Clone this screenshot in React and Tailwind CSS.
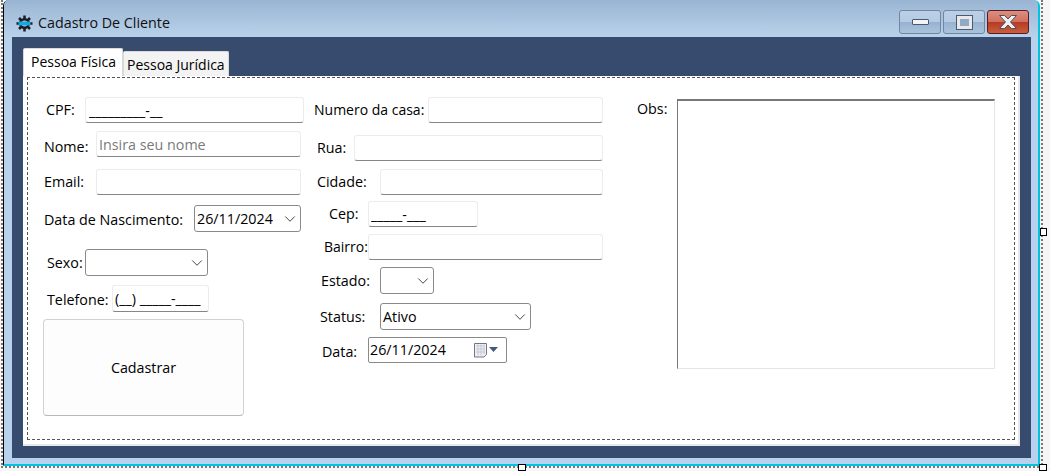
import { ChevronDown } from 'lucide-react';

const font = "font-['Open_Sans','Noto_Sans',sans-serif]";

// text box: light border with a darker bottom edge
function Field({ className = '', value = '', placeholder = '' }) {
  return (
    <input
      readOnly
      defaultValue={value}
      placeholder={placeholder}
      className={`bg-white border border-[#ececec] border-b-[#868686] rounded-[3px] px-[2px] text-[14.3px] text-black placeholder:text-[#7a7a7a] outline-none ${className}`}
    />
  );
}

function Combo({ className = '', value = '' }) {
  return (
    <div className={`flex items-center justify-between bg-white border border-[#8a8a8a] rounded-[3px] pl-[2px] pr-[1px] text-[14.3px] text-black ${className}`}>
      <span>{value}</span>
      <ChevronDown size={18} strokeWidth={1.2} color="#333" />
    </div>
  );
}

function CalendarIcon() {
  return (
    <svg width="33" height="17" viewBox="0 0 33 17">
      <path d="M1.500 1.500h12v11l-2.500 2.500h-9.500z" fill="#eef0f4" stroke="#77757a" />
      <path d="M3 4h9M3 7h9M3 10h9M5 2.500v11M8 2.500v11M11 2.500v10" stroke="#c2c9d6" fill="none" />
      <path d="M16 5h9l-4.500 5z" fill="#44597c" />
    </svg>
  );
}

function WindowButton({ className = '', children }) {
  return (
    <button className={`relative flex items-center justify-center w-[42px] h-[24px] rounded-[3px] border ${className}`}>
      {children}
    </button>
  );
}

export default function App() {
  return (
    <div className={`relative w-[1050px] h-[471px] overflow-hidden bg-[#f6f6f6] ${font}`}>
      {/* form window */}
      <div className="absolute left-[3px] top-0 w-[1037px] h-[466px] flex flex-col bg-[#b8d1ec] border-l border-black border-r-2 border-r-[#00c4e0] border-b-2 border-b-[#00c4e0] rounded-t-[6px] overflow-hidden">
        {/* title bar */}
        <div className="flex items-start h-[37px] shrink-0 bg-gradient-to-b from-[#9ab5d3] to-[#b9d2eb]">
          <div className="flex items-center mt-[14px] ml-[12px] gap-[5px] text-[14.3px] leading-[18px] text-[#111]">
            <svg width="17" height="17" viewBox="0 0 17 17">
              <path d="M8.500 0.500v16M0.500 8.500h16M3 3l11 11M14 3l-11 11" stroke="#1c1c24" strokeWidth="2.500" />
              <circle cx="8.500" cy="8.500" r="5.500" fill="#1c1c24" />
              <circle cx="8.500" cy="8.500" r="3" fill="#b9d2eb" />
              <rect x="2.500" y="6.500" width="12" height="4" rx="1" fill="#14a8e0" />
            </svg>
            <span>Cadastro De Cliente</span>
          </div>
          <div className="flex ml-auto mt-[10px] mr-[9px] gap-[2px]">
            <WindowButton className="border-[#72879f] bg-[linear-gradient(#bcd0e6_0%,#b4cbe3_48%,#97b2cf_50%,#a9c3de_100%)]">
              <span className="w-[17px] h-[6px] bg-[#f2f3f5] border border-[#4a5a70] rounded-[1px]" />
            </WindowButton>
            <WindowButton className="border-[#72879f] bg-[linear-gradient(#bcd0e6_0%,#b4cbe3_48%,#97b2cf_50%,#a9c3de_100%)]">
              <span className="w-[15px] h-[13px] border-[3px] border-[#e8e8ea] outline outline-1 outline-[#4a5a70] bg-[#8fa9c6]" />
            </WindowButton>
            <WindowButton className="border-[#5b1a24] bg-[linear-gradient(#da8f80_0%,#d2705e_48%,#b53a22_50%,#c8603f_100%)]">
              <svg width="20" height="16" viewBox="0 0 20 16">
                <path d="M1.500 1.500h5l3.500 3.500 3.500-3.500h5l-6 6.500 6 6.500h-5l-3.500-3.500-3.500 3.500h-5l6-6.500z" fill="#eeeff1" stroke="#4d4f5e" />
              </svg>
            </WindowButton>
          </div>
        </div>

        {/* client area */}
        <div className="w-[1019px] h-[421px] ml-[8px] bg-[#364b6d] pl-[11px] pt-[11px]">
          {/* tabs */}
          <div className="flex items-end h-[28px] text-[14px] leading-[18px] text-black">
            <div className="h-[28px] w-[100px] pl-[7px] pt-[4px] bg-white border border-b-0 border-[#d9d9d9] rounded-t-[2px]">Pessoa Física</div>
            <div className="h-[25px] w-[106px] pl-[3px] pt-[4px] bg-[#f3f3f3] border border-b-0 border-[#d9d9d9] rounded-t-[2px]">Pessoa Jurídica</div>
          </div>
          {/* tab page */}
          <div className="w-[997px] h-[370px] bg-white border-r-2 border-b-2 border-[#e8e8e8] pl-[4px] pt-[1px]">
            <div className="flex w-[988px] h-[363px] border border-dashed border-[#555] text-[14.3px] leading-[18px] text-black">
              {/* coluna 1 */}
              <div className="flex flex-col w-[271px] ml-[15px] pt-[19px] shrink-0">
                <div className="flex items-center h-[26px] pl-[3px]">
                  <span className="w-[39px]">CPF:</span>
                  <Field className="w-[219px] h-[26px] pl-[3px]" value="_________-__" />
                </div>
                <div className="flex items-center h-[26px] mt-[8px] pl-[1px]">
                  <span className="w-[52px] mt-[6px]">Nome:</span>
                  <Field className="w-[205px] h-[26px]" placeholder="Insira seu nome" />
                </div>
                <div className="flex items-center h-[26px] mt-[12px] pl-[1px]">
                  <span className="w-[52px]">Email:</span>
                  <Field className="w-[205px] h-[26px]" />
                </div>
                <div className="flex items-center h-[27px] mt-[10px] pl-[1px]">
                  <span className="w-[150px] mt-[3px]">Data de Nascimento:</span>
                  <Combo className="w-[107px] h-[27px]" value="26/11/2024" />
                </div>
                <div className="flex items-center h-[27px] mt-[17px] pl-[4px]">
                  <span className="w-[38px]">Sexo:</span>
                  <Combo className="w-[123px] h-[27px]" />
                </div>
                <div className="flex items-center h-[27px] mt-[9px] pl-[4px]">
                  <span className="w-[65px] mt-[3px]">Telefone:</span>
                  <Field className="w-[97px] h-[27px]" value="(__) _____-____" />
                </div>
                <button className="w-[201px] h-[97px] mt-[7px] bg-[#fdfdfd] border border-[#d2d2d2] border-b-[#b8b8b8] rounded-[4px]">Cadastrar</button>
              </div>

              {/* coluna 2 */}
              <div className="flex flex-col w-[323px] pt-[19px] shrink-0">
                <div className="flex items-center h-[26px]">
                  <span className="w-[114px] text-[14px]">Numero da casa:</span>
                  <Field className="w-[175px] h-[26px]" />
                </div>
                <div className="flex items-center h-[26px] mt-[12px] pl-[3px]">
                  <span className="w-[37px]">Rua:</span>
                  <Field className="w-[249px] h-[26px]" />
                </div>
                <div className="flex items-center h-[26px] mt-[8px] pl-[3px]">
                  <span className="w-[63px]">Cidade:</span>
                  <Field className="w-[223px] h-[26px]" />
                </div>
                <div className="flex items-center h-[26px] mt-[6px] pl-[15px]">
                  <span className="w-[39px]">Cep:</span>
                  <Field className="w-[110px] h-[26px]" value="_____-___" />
                </div>
                <div className="flex items-center h-[26px] mt-[7px] pl-[10px]">
                  <span className="w-[44px] text-[14px]">Bairro:</span>
                  <Field className="w-[235px] h-[26px]" />
                </div>
                <div className="flex items-center h-[27px] mt-[7px] pl-[7px]">
                  <span className="w-[59px]">Estado:</span>
                  <Combo className="w-[54px] h-[27px]" />
                </div>
                <div className="flex items-center h-[27px] mt-[9px] pl-[6px]">
                  <span className="w-[60px]">Status:</span>
                  <Combo className="w-[151px] h-[27px]" value="Ativo" />
                </div>
                <div className="flex items-center h-[26px] mt-[7px] pl-[8px]">
                  <span className="w-[46px] mt-[4px]">Data:</span>
                  <div className="flex items-center justify-between w-[139px] h-[26px] bg-white border border-[#8a8a8a] rounded-[2px] pl-[1px]">
                    <span>26/11/2024</span>
                    <CalendarIcon />
                  </div>
                </div>
              </div>

              {/* coluna 3 */}
              <div className="flex items-start pt-[21px]">
                <span className="w-[40px] mt-[1px]">Obs:</span>
                <textarea readOnly className="w-[318px] h-[270px] bg-white border border-[#e6e6e6] border-t-2 border-t-[#777] border-l-[#777] resize-none outline-none" />
              </div>
            </div>
          </div>
        </div>
      </div>

      {/* designer selection frame */}
      <div className="absolute left-[1px] top-0 w-[1042px] h-[468px] border-l-2 border-r-2 border-b-2 border-dotted border-[#777] pointer-events-none" />
      <div className="absolute left-[1040px] top-[228px] w-[7px] h-[8px] bg-white border border-black" />
      <div className="absolute left-[518px] top-[464px] w-[8px] h-[7px] bg-white border border-black" />
      <div className="absolute left-[1039px] top-[464px] w-[8px] h-[7px] bg-white border border-black" />
    </div>
  );
}
